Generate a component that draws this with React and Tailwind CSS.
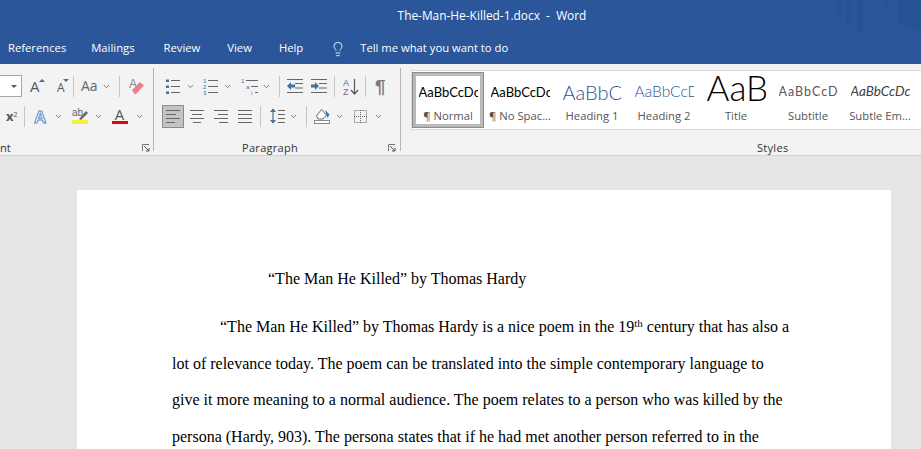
import { ChevronDown, Lightbulb } from 'lucide-react'

const tabs = [
  ['References', 'ml-[8px]'],
  ['Mailings', 'ml-[25px]'],
  ['Review', 'ml-[29px]'],
  ['View', 'ml-[27px]'],
  ['Help', 'ml-[27px]'],
]

const styleItems = [
  { sample: 'AaBbCcDc', label: '¶ Normal', cls: 'text-[13px] text-black', active: true },
  { sample: 'AaBbCcDc', label: '¶ No Spac...', cls: 'text-[13px] text-black' },
  { sample: 'AaBbCc', label: 'Heading 1', cls: 'text-[20px] font-light text-[#2f5496]' },
  { sample: 'AaBbCcD', label: 'Heading 2', cls: 'text-[15.500px] font-light text-[#2f5496]' },
  { sample: 'AaB', label: 'Title', box: 'pb-[9px]', cls: 'text-[35px] font-light text-black' },
  { sample: 'AaBbCcD', label: 'Subtitle', cls: 'text-[12.500px] tracking-[1px] text-[#595959]' },
  { sample: 'AaBbCcDc', label: 'Subtle Em...', cls: 'text-[13.500px] italic text-[#404040]' },
]

const bodyLines = [
  'lot of relevance today. The poem can be translated into the simple contemporary language to',
  'give it more meaning to a normal audience. The poem relates to a person who was killed by the',
  'persona (Hardy, 903). The persona states that if he had met another person referred to in the',
]

function Chev({ className = '' }) {
  return <ChevronDown size={9} strokeWidth={2} className={`shrink-0 text-[#555] ${className}`} />
}

function Sep({ className = '' }) {
  return <div className={`h-[21px] w-px shrink-0 bg-[#c6c6c6] ${className}`} />
}

function Align({ kind }) {
  const rows = {
    left: [[0, 14], [0, 10], [0, 14], [0, 9]],
    center: [[0, 14], [2, 12], [0, 14], [3, 11]],
    right: [[0, 14], [4, 14], [0, 14], [5, 14]],
    justify: [[0, 14], [0, 14], [0, 14], [0, 14]],
  }[kind]
  return (
    <svg width="14" height="13" className="shrink-0">
      {rows.map(([a, b], i) => (
        <line key={i} x1={a} x2={b} y1={i * 4 + 0.5} y2={i * 4 + 0.5} stroke="#666" />
      ))}
    </svg>
  )
}

function Bullets() {
  return (
    <svg width="14" height="15">
      {[1.5, 7.5, 13.5].map((y) => (
        <g key={y}>
          <rect x="0" y={y - 1} width="3" height="2.5" fill="#41719c" />
          <line x1="5" x2="14" y1={y} y2={y} stroke="#666" />
        </g>
      ))}
    </svg>
  )
}

function Numbered() {
  return (
    <svg width="15" height="17">
      {['1', '2', '3'].map((t, i) => (
        <g key={t}>
          <text x="0" y={i * 6 + 5} fontSize="6" fontFamily="Liberation Sans" fill="#41719c">{t}</text>
          <line x1="5" x2="15" y1={i * 6 + 2.5} y2={i * 6 + 2.5} stroke="#666" />
        </g>
      ))}
    </svg>
  )
}

function Multilevel() {
  return (
    <svg width="17" height="17">
      <text x="0" y="5" fontSize="6" fontFamily="Liberation Sans" fill="#41719c">1</text>
      <line x1="5" x2="17" y1="2.5" y2="2.5" stroke="#666" />
      <text x="5" y="11" fontSize="6" fontFamily="Liberation Sans" fill="#41719c">a</text>
      <line x1="10" x2="17" y1="8.5" y2="8.5" stroke="#666" />
      <text x="10" y="17" fontSize="6" fontFamily="Liberation Sans" fill="#41719c">i</text>
      <line x1="14" x2="17" y1="14.5" y2="14.5" stroke="#666" />
    </svg>
  )
}

function Indent({ flip }) {
  return (
    <svg width="16" height="14">
      {[0.5, 13.5].map((y) => (
        <line key={y} x1="0" x2="16" y1={y} y2={y} stroke="#666" />
      ))}
      <line x1="8" x2="16" y1="4.5" y2="4.5" stroke="#666" />
      <line x1="8" x2="16" y1="9" y2="9" stroke="#666" />
      <path d={flip ? 'M0 5.500h4V3l4 4-4 4V8.500H0z' : 'M8 5.500H4V3L0 7l4 4V8.500h4z'} fill="#41719c" />
    </svg>
  )
}

function SortIcon() {
  return (
    <svg width="16" height="17">
      <text x="0" y="8" fontSize="9" fontFamily="Liberation Sans" fill="#41719c">A</text>
      <text x="0" y="17" fontSize="9" fontFamily="Liberation Sans" fill="#7b5ea7">Z</text>
      <path d="M11.500 1v15M8 12l3.500 4 3.500-4" fill="none" stroke="#555" strokeWidth="1.2" />
    </svg>
  )
}

function Eraser() {
  return (
    <svg width="15" height="17">
      <text x="0" y="10" fontSize="12" fontFamily="Liberation Sans" fill="#888">A</text>
      <path d="M3 12l8-8 4 3.500-8 8.500H5.500z" fill="#e8808f" />
    </svg>
  )
}

function TextEffect() {
  return (
    <svg width="14" height="15">
      <text x="0" y="14" fontSize="17" fontFamily="Liberation Sans" fontWeight="bold" fill="#fff" stroke="#5b8dc9" strokeWidth="1">A</text>
    </svg>
  )
}

function Highlight() {
  return (
    <svg width="17" height="16">
      <text x="0" y="8" fontSize="10" fontFamily="Liberation Sans" fill="#666">ab</text>
      <path d="M7 11l7-8 2 2-7 7z" fill="#666" />
      <rect x="0" y="12" width="16" height="4" rx="1.500" fill="#f5f232" />
    </svg>
  )
}

function LineSpacing() {
  return (
    <svg width="15" height="16">
      <path d="M3 1v14" stroke="#41719c" strokeWidth="1.2" />
      <path d="M0 4l3-3.500 3 3.500zM0 12l3 3.500 3-3.500z" fill="#41719c" />
      {[2.5, 6.5, 10.5, 14.5].map((y) => (
        <line key={y} x1="8" x2="15" y1={y} y2={y} stroke="#666" />
      ))}
    </svg>
  )
}

function Shading() {
  return (
    <svg width="16" height="16">
      <path d="M2.500 8L7.500 1.500l5 5.500-3.500 4H4z" fill="#fff" stroke="#666" />
      <path d="M11 2l4.500 4.500-2 3.500z" fill="#41719c" />
      <rect x="0.500" y="12.500" width="15" height="3" fill="#fff" stroke="#888" />
    </svg>
  )
}

function Borders() {
  return (
    <svg width="13" height="13">
      <rect x="0.500" y="0.500" width="12" height="12" fill="none" stroke="#666" strokeDasharray="1 1" />
      <path d="M6.500 0v13M0 6.500h13" stroke="#666" strokeDasharray="1 1" />
    </svg>
  )
}

function Launcher() {
  return (
    <svg width="8" height="8" className="shrink-0">
      <path d="M0.500 7V0.500H7" fill="none" stroke="#777" />
      <path d="M2 2l5 5M7 4v3H4" fill="none" stroke="#555" />
    </svg>
  )
}

function GroupSep() {
  return <div className="my-[4px] w-px shrink-0 bg-[#b5b5b5]" />
}

function FontGroup() {
  return (
    <div className="flex w-[153px] shrink-0 flex-col">
      <div className="mt-[11px] flex h-[22px] items-center">
        <div className="flex h-[22px] w-[22px] shrink-0 items-center justify-end rounded-r-[1px] border border-l-0 border-[#a6a6a6] bg-white pr-[4px]">
          <div className="h-0 w-0 border-x-[3px] border-t-[3px] border-x-transparent border-t-[#555]" />
        </div>
        <div className="relative ml-[8px] w-[12px] text-[15px] leading-none text-[#555]">
          A
          <div className="absolute -right-[3px] top-0 h-0 w-0 border-x-[3px] border-b-[3px] border-x-transparent border-b-[#41719c]" />
        </div>
        <div className="relative ml-[15px] w-[9px] pt-[3px] text-[12px] leading-none text-[#555]">
          A
          <div className="absolute -right-[3px] top-0 h-0 w-0 border-x-[3px] border-t-[3px] border-x-transparent border-t-[#41719c]" />
        </div>
        <Sep className="ml-[7px]" />
        <span className="ml-[7px] text-[14px] leading-none text-[#666]">Aa</span>
        <Chev className="ml-[4px]" />
        <Sep className="ml-[8px]" />
        <div className="ml-[9px]"><Eraser /></div>
      </div>
      <div className="mt-[8px] flex h-[22px] items-center">
        <span className="ml-[6px] text-[13px] font-bold leading-none text-[#555]">x<sup className="text-[7px] font-normal">2</sup></span>
        <Sep className="ml-[6px]" />
        <div className="ml-[9px]"><TextEffect /></div>
        <Chev className="ml-[6px]" />
        <div className="ml-[9px]"><Highlight /></div>
        <Chev className="ml-[5px]" />
        <div className="ml-[9px] flex h-[16px] w-[16px] flex-col items-center">
          <span className="text-[15px] leading-[13px] text-[#555]">A</span>
          <div className="mt-auto h-[4px] w-full bg-[#e3000f]" />
        </div>
        <Chev className="ml-[7px]" />
      </div>
      <div className="mt-auto flex h-[14px] items-center pr-[3px]">
        <span className="text-[11px] text-[#333]">nt</span>
        <div className="ml-auto"><Launcher /></div>
      </div>
    </div>
  )
}

function ParagraphGroup() {
  return (
    <div className="flex w-[246px] shrink-0 flex-col">
      <div className="mt-[11px] flex h-[22px] items-center pl-[12px]">
        <Bullets />
        <Chev className="ml-[6px]" />
        <div className="ml-[8px]"><Numbered /></div>
        <Chev className="ml-[5px]" />
        <div className="ml-[9px]"><Multilevel /></div>
        <Chev className="ml-[4px]" />
        <Sep className="ml-[8px]" />
        <div className="ml-[7px]"><Indent /></div>
        <div className="ml-[8px]"><Indent flip /></div>
        <Sep className="ml-[7px]" />
        <div className="ml-[8px]"><SortIcon /></div>
        <Sep className="ml-[6px]" />
        <span className="ml-[9px] font-['Liberation_Sans',sans-serif] text-[19px] font-bold leading-none text-[#7a7a7a]">¶</span>
      </div>
      <div className="mt-[8px] flex h-[22px] items-center pl-[8px]">
        <div className="flex h-[23px] w-[22px] items-center justify-center border border-[#8c8c8c] bg-[#c3c3c3]">
          <Align kind="left" />
        </div>
        <div className="ml-[6px]"><Align kind="center" /></div>
        <div className="ml-[10px]"><Align kind="right" /></div>
        <div className="ml-[10px]"><Align kind="justify" /></div>
        <Sep className="ml-[8px]" />
        <div className="ml-[9px]"><LineSpacing /></div>
        <Chev className="ml-[4px]" />
        <Sep className="ml-[8px]" />
        <div className="ml-[7px]"><Shading /></div>
        <Chev className="ml-[5px]" />
        <div className="ml-[10px]"><Borders /></div>
        <Chev className="ml-[7px]" />
      </div>
      <div className="mt-auto flex h-[14px] items-center pr-[4px]">
        <span className="ml-[88px] text-[11px] tracking-[0.3px] text-[#333]">Paragraph</span>
        <div className="ml-auto"><Launcher /></div>
      </div>
    </div>
  )
}

function StylesGroup() {
  return (
    <div className="flex min-w-0 flex-1 flex-col pl-[10px]">
      <div className="mt-[6px] flex h-[60px] overflow-hidden border-y border-l border-[#dcdcdc] bg-white py-px">
        {styleItems.map((s) => (
          <div
            key={s.label}
            className={`flex h-[56px] w-[72px] shrink-0 flex-col items-center border-[4px] ${s.active ? 'border-[#b9b9b9] outline outline-1 -outline-offset-1 outline-[#8c8c8c]' : 'border-transparent'}`}
          >
            <div className={`flex h-[32px] w-[59px] items-center justify-start overflow-hidden ${s.box || ''}`}>
              <span className={`whitespace-nowrap font-['Lato',sans-serif] leading-none ${s.cls}`}>{s.sample}</span>
            </div>
            <span className="whitespace-nowrap text-[11.250px] leading-[15px] text-[#555]">{s.label}</span>
          </div>
        ))}
      </div>
      <div className="mt-auto flex h-[14px] items-center pl-[346px]">
        <span className="text-[11px] tracking-[0.3px] text-[#333]">Styles</span>
      </div>
    </div>
  )
}

export default function App() {
  return (
    <div className="flex h-[449px] w-[921px] flex-col overflow-hidden bg-[#e6e6e6] font-['Open_Sans','Noto_Sans',sans-serif]">
      <header className="relative h-[64px] shrink-0 overflow-hidden bg-[#2b579a] text-white">
        <div className="flex h-[32px] items-center justify-center pl-[63px] text-[11.900px]">
          The-Man-He-Killed-1.docx&nbsp; -&nbsp; Word
        </div>
        <nav className="flex h-[33px] items-center text-[11.250px]">
          {tabs.map(([t, m]) => (
            <span key={t} className={m}>{t}</span>
          ))}
          <Lightbulb size={16} strokeWidth={1.3} className="ml-[27px]" />
          <span className="ml-[14px]">Tell me what you want to do</span>
        </nav>
        <svg width="86" height="34" className="absolute right-0 top-0 text-[#24508f]">
          <rect x="0" y="0" width="6" height="18" fill="currentColor" opacity="0.5" />
          <rect x="11" y="0" width="5" height="25" fill="currentColor" opacity="0.4" />
          <rect x="22" y="0" width="6" height="32" fill="currentColor" opacity="0.6" />
          <rect x="48" y="0" width="6" height="10" fill="currentColor" opacity="0.4" />
          <path d="M64 0h22v32l-22-8z" fill="currentColor" opacity="0.7" />
        </svg>
      </header>

      <section className="flex h-[92px] shrink-0 border-b border-[#d2d2d2] bg-[#f3f3f3]">
        <FontGroup />
        <GroupSep />
        <ParagraphGroup />
        <GroupSep />
        <StylesGroup />
      </section>

      <main className="flex min-h-0 flex-1 flex-col items-start overflow-hidden pl-[77px] pt-[34px]">
        <article className="h-[400px] w-[814px] shrink-0 bg-white px-[95px] pt-[76px] font-['Liberation_Serif',serif] text-[16px] text-black">
          <p className="pl-[96px] leading-[26px]">“The Man He Killed” by Thomas Hardy</p>
          <p className="mt-[17px] whitespace-nowrap pl-[48px] leading-[36.500px]">
            “The Man He Killed” by Thomas Hardy is a nice poem in the 19<sup className="text-[11px]">th</sup> century that has also a
          </p>
          {bodyLines.map((l) => (
            <p key={l} className="whitespace-nowrap leading-[36.500px]">{l}</p>
          ))}
        </article>
      </main>
    </div>
  )
}
